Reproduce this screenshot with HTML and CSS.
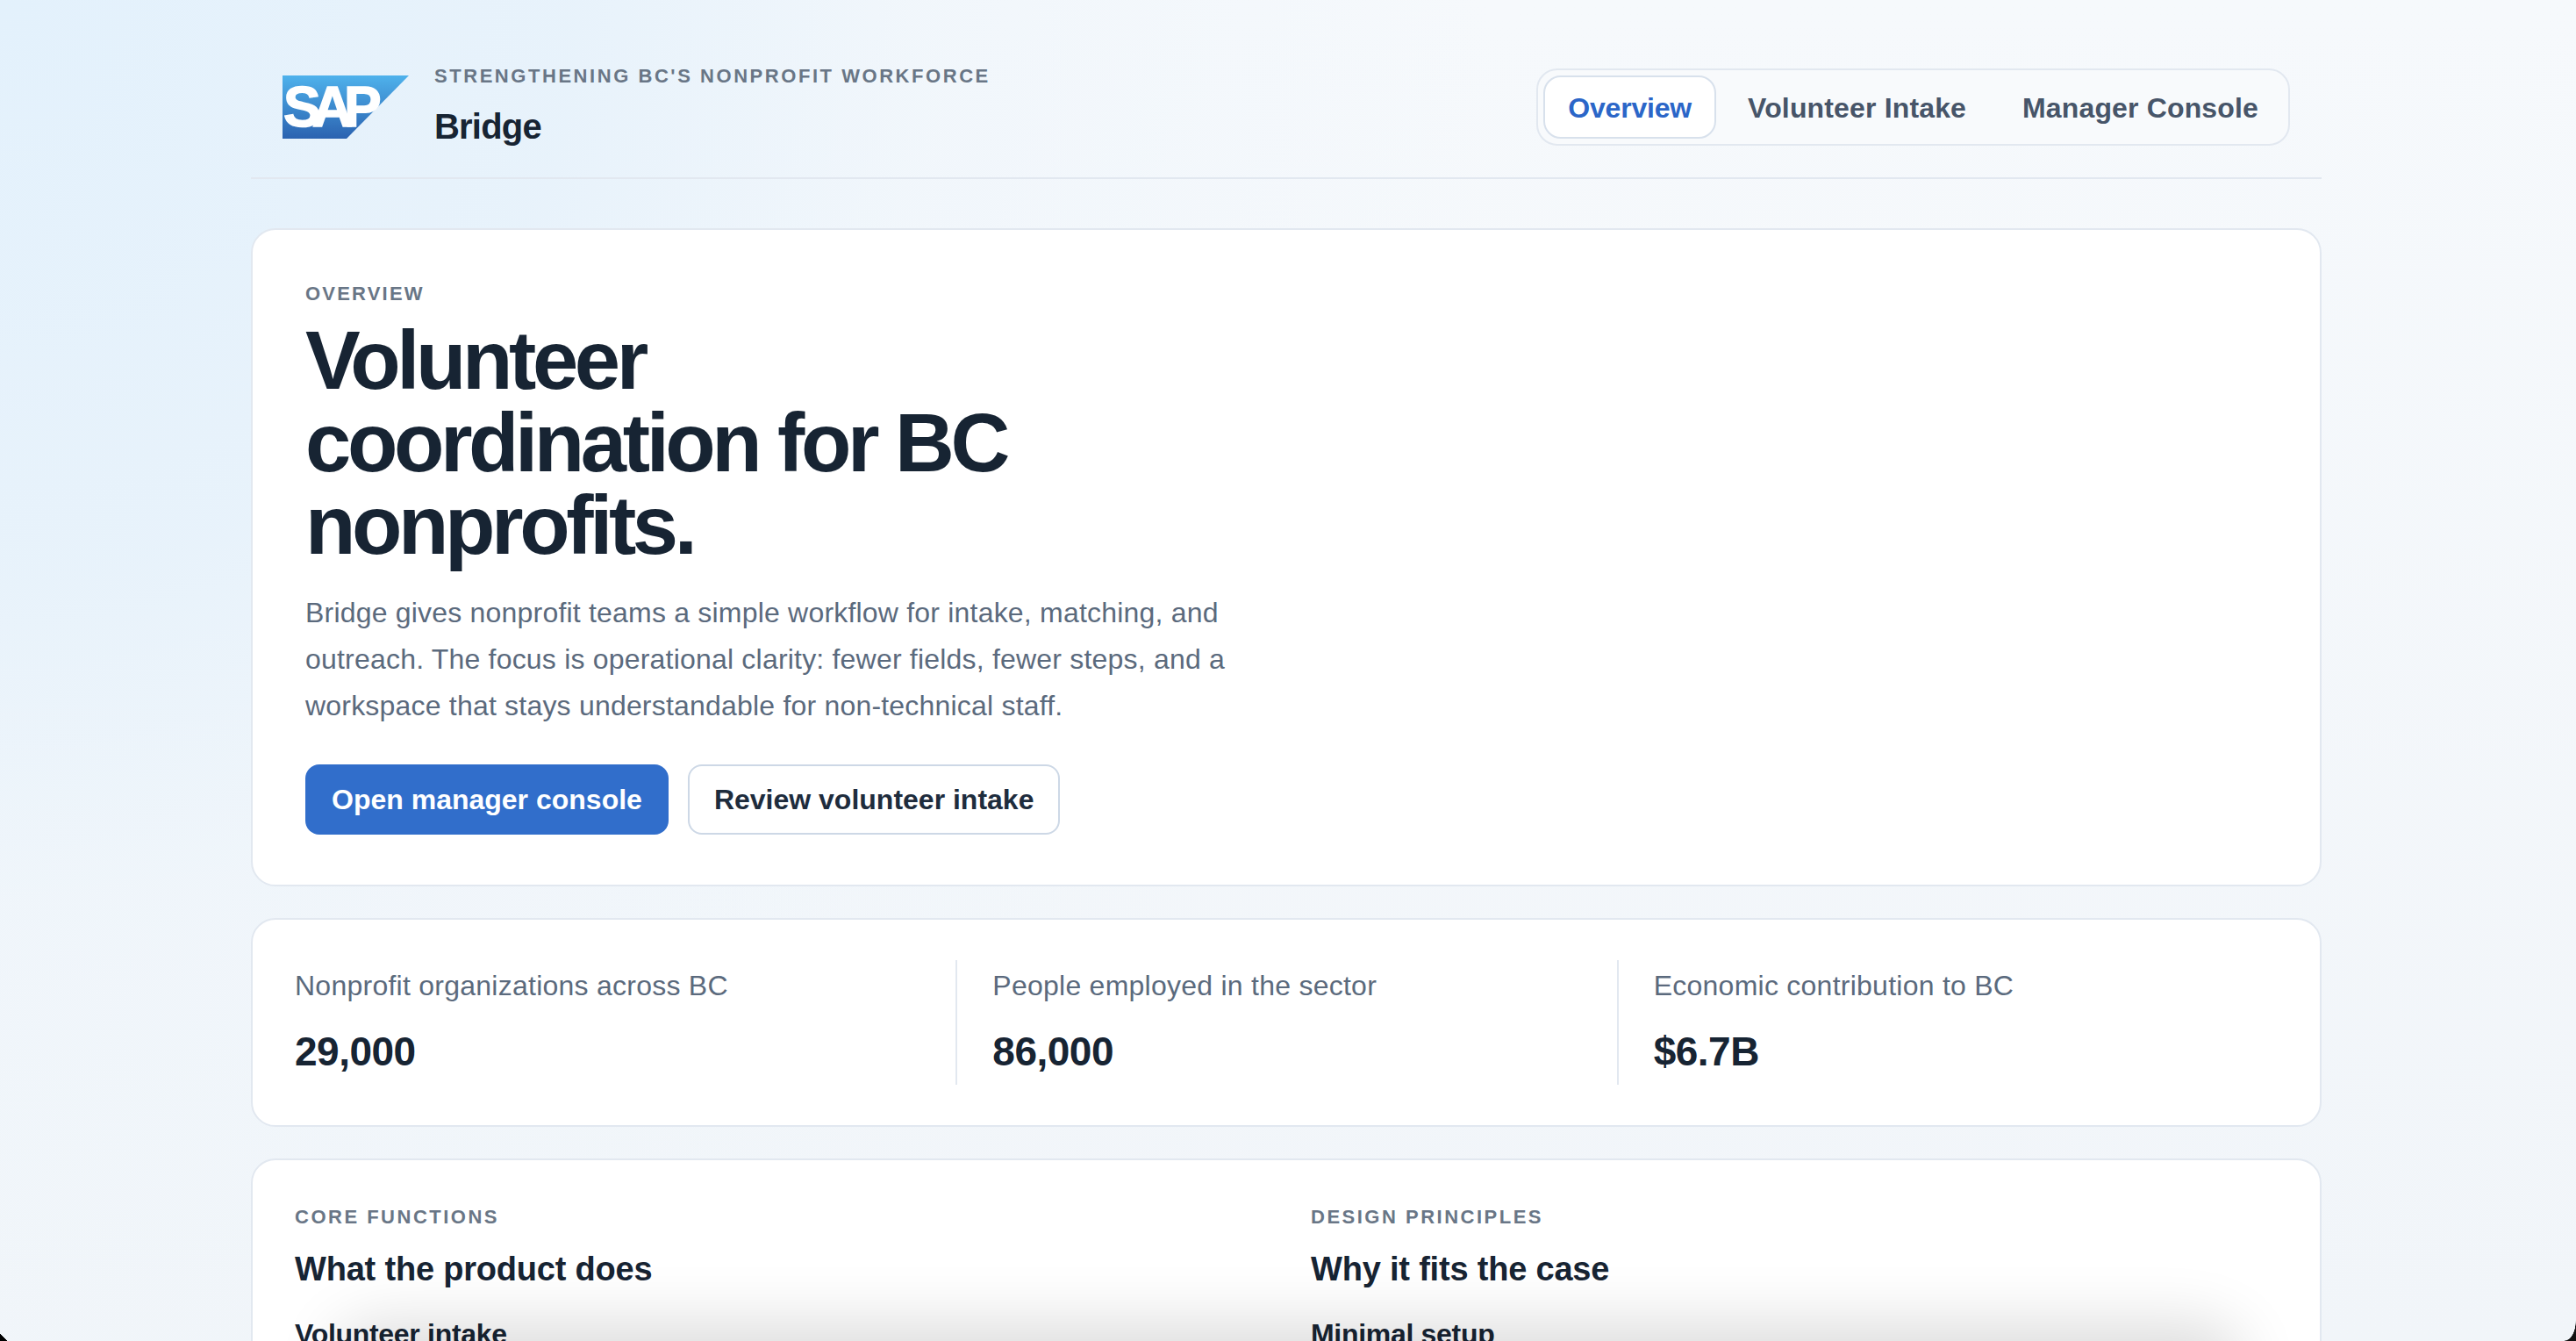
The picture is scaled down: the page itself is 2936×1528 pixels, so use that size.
FILE: index.html
```html
<!DOCTYPE html>
<html lang="en">
<head>
<meta charset="utf-8">
<title>Bridge</title>
<link rel="stylesheet" href="styles.css">
</head>
<body>
<div class="page">
  <header class="topbar">
    <div class="brand">
      <svg class="logo" viewBox="0 0 144 72" aria-hidden="true">
        <defs><linearGradient id="sapg" x1="0" y1="0" x2="0" y2="1"><stop offset="0" stop-color="#4fb2ec"/><stop offset="1" stop-color="#2b62b0"/></linearGradient></defs>
        <polygon points="0,0 144,0 73,72 0,72" fill="url(#sapg)"/>
        <text class="logo-text" x="1" y="58">SAP</text>
      </svg>
      <div class="brand-text">
        <div class="tagline">STRENGTHENING BC'S NONPROFIT WORKFORCE</div>
        <div class="brand-name">Bridge</div>
      </div>
    </div>
    <nav class="tabs">
      <a class="tab active">Overview</a>
      <a class="tab">Volunteer Intake</a>
      <a class="tab">Manager Console</a>
    </nav>
  </header>
  <main class="stack">
    <section class="card hero">
      <div class="eyebrow">OVERVIEW</div>
      <h1>Volunteer coordination for BC nonprofits.</h1>
      <p class="lead">Bridge gives nonprofit teams a simple workflow for intake, matching, and outreach. The focus is operational clarity: fewer fields, fewer steps, and a workspace that stays understandable for non-technical staff.</p>
      <div class="actions">
        <a class="btn primary">Open manager console</a>
        <a class="btn secondary">Review volunteer intake</a>
      </div>
    </section>
    <section class="card stats">
      <div class="stat"><div class="stat-label">Nonprofit organizations across BC</div><div class="stat-value">29,000</div></div>
      <div class="stat"><div class="stat-label">People employed in the sector</div><div class="stat-value">86,000</div></div>
      <div class="stat"><div class="stat-label">Economic contribution to BC</div><div class="stat-value">$6.7B</div></div>
    </section>
    <section class="card columns">
      <div class="col">
        <div class="eyebrow small">CORE FUNCTIONS</div>
        <h2>What the product does</h2>
        <h3>Volunteer intake</h3>
      </div>
      <div class="col">
        <div class="eyebrow small">DESIGN PRINCIPLES</div>
        <h2>Why it fits the case</h2>
        <h3>Minimal setup</h3>
      </div>
    </section>
  </main>
</div>
<div class="dock-shadow"></div>
<div class="corner left"></div>
<div class="corner right"></div>
</body>
</html>
```
FILE: styles.css
```css
* { box-sizing: border-box; }
html, body { margin: 0; height: 100%; overflow: hidden; }
body {
  font-family: "Liberation Sans", Arial, sans-serif;
  color: #172433;
  background:
    radial-gradient(circle at 0 0, #e3f1fc 0, rgba(231,242,251,.95) 650px, rgba(238,245,251,.6) 1050px, rgba(238,245,251,0) 1700px),
    linear-gradient(180deg, #f6f9fc 0, #f1f5f9 100%);
}
.page { width: 2360px; margin: 0 auto; transform: translateX(-2px); }
.topbar { height: 204px; padding: 78px 36px 0; display: flex; justify-content: space-between; align-items: flex-start; border-bottom: 2px solid #e2e8f0; }
.brand { display: flex; gap: 29px; align-items: center; height: 88px; }
.logo { width: 144px; height: 72px; display: block; }
.logo-text { font-family: "Liberation Sans", sans-serif; font-weight: 700; font-size: 64px; fill: #fff; stroke: #fff; stroke-width: 1.5px; letter-spacing: -10px; }
.tagline { font-size: 22px; font-weight: 700; letter-spacing: 2.55px; color: #697686; margin-top: -4px; }
.brand-name { font-size: 40px; font-weight: 700; letter-spacing: -0.8px; color: #172433; margin-top: 22px; }
.tabs { display: flex; gap: 8px; height: 88px; padding: 6px; border: 2px solid #e2e8f0; border-radius: 24px; background: #f8fafc; }
.tab { height: 72px; padding: 2px 26px 0; display: flex; align-items: center; border-radius: 20px; border: 2px solid transparent; font-size: 32px; font-weight: 700; letter-spacing: .15px; color: #475569; }
.tab.active { background: #fff; border-color: #d8e1ec; color: #2b66c8; letter-spacing: -.2px; }
.stack { display: flex; flex-direction: column; gap: 36px; padding-top: 56px; }
.card { background: #fff; border: 2px solid #e2e8f0; border-radius: 28px; }
.hero { height: 750px; padding: 60px 60px 0; }
.eyebrow { font-size: 22px; font-weight: 700; letter-spacing: 2.2px; color: #697686; }
h1 { margin: 16px 0 0; width: 860px; font-size: 94px; line-height: 94px; font-weight: 700; letter-spacing: -4.4px; color: #172433; }
.lead { margin: 26px 0 0; width: 1060px; font-size: 32px; line-height: 53px; letter-spacing: .2px; color: #5b6a7d; }
.actions { display: flex; gap: 22px; margin-top: 40px; }
.btn { height: 80px; padding: 0 30px; display: flex; align-items: center; border-radius: 16px; font-size: 32px; font-weight: 700; }
.primary { background: #316ecb; color: #fff; }
.secondary { background: #fff; border: 2px solid #cdd8e6; color: #1e2c3d; padding: 0 28px; }
.stats { height: 238px; padding: 46px 48px; display: grid; grid-template-columns: 1fr 1fr 1fr; }
.stat-label { font-size: 32px; line-height: 40px; letter-spacing: .25px; color: #5b6a7d; padding-top: 9px; }
.stat-value { margin-top: 28px; font-size: 46px; font-weight: 700; letter-spacing: -.5px; }
.stat + .stat { border-left: 2px solid #e2e8f0; padding-left: 40px; }
.columns { height: 300px; padding: 52px 48px; display: grid; grid-template-columns: 1fr 1fr; gap: 56px; }
.small { font-size: 22px; letter-spacing: 2.5px; }
h2 { margin: 25px 0 0; font-size: 38px; font-weight: 700; letter-spacing: -.2px; }
h3 { margin: 34px 0 0; font-size: 32px; font-weight: 700; letter-spacing: -.3px; }
.dock-shadow { position: fixed; left: 400px; right: 400px; bottom: -60px; height: 60px; box-shadow: 0 0 70px 20px rgba(0,0,0,.14); border-radius: 30px; }
.corner { position: fixed; bottom: 0; }
.corner.left { left: 0; width: 8px; height: 8px; background: linear-gradient(to top right, #000 50%, transparent 52%); }
.corner.right { right: 0; width: 13px; height: 23px; background: radial-gradient(13px 23px at 0 0, transparent 96%, #111 100%); }
```
